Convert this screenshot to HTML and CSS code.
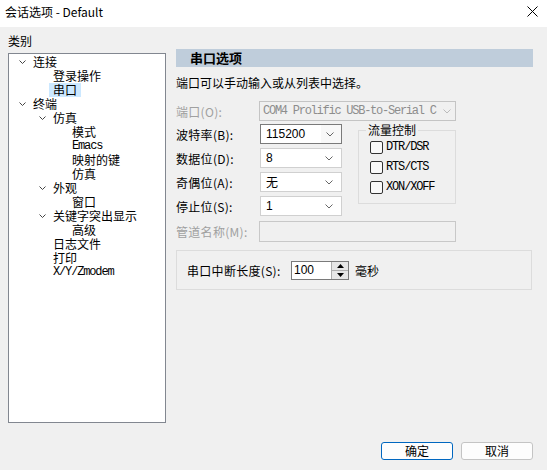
FILE: index.html
```html
<!DOCTYPE html>
<html lang="zh">
<head>
<meta charset="utf-8">
<title>会话选项 - Default</title>
<link rel="stylesheet" href="styles.css">
</head>
<body>
<div class="window">
  <div class="titlebar">
    <span class="title">会话选项 - Default</span>
    <svg class="close" width="11" height="11" viewBox="0 0 11 11"><path d="M0.5 0.5 L10.5 10.5 M10.5 0.5 L0.5 10.5" stroke="#000" stroke-width="1" fill="none"/></svg>
  </div>
  <div class="content">
    <div class="left">
      <div class="cat-label">类别</div>
      <div class="tree">
        <div class="node l0c"><span class="chev"><svg width="7" height="5" viewBox="0 0 7 5"><path d="M0.5 0.5 L3.5 3.5 L6.5 0.5" stroke="#444" fill="none"/></svg></span>连接</div>
        <div class="node l1">登录操作</div>
        <div class="node l1"><span class="sel">串口</span></div>
        <div class="node l0c"><span class="chev"><svg width="7" height="5" viewBox="0 0 7 5"><path d="M0.5 0.5 L3.5 3.5 L6.5 0.5" stroke="#444" fill="none"/></svg></span>终端</div>
        <div class="node l1c"><span class="chev"><svg width="7" height="5" viewBox="0 0 7 5"><path d="M0.5 0.5 L3.5 3.5 L6.5 0.5" stroke="#444" fill="none"/></svg></span>仿真</div>
        <div class="node l2">模式</div>
        <div class="node l2 mono">Emacs</div>
        <div class="node l2">映射的键</div>
        <div class="node l2">仿真</div>
        <div class="node l1c"><span class="chev"><svg width="7" height="5" viewBox="0 0 7 5"><path d="M0.5 0.5 L3.5 3.5 L6.5 0.5" stroke="#444" fill="none"/></svg></span>外观</div>
        <div class="node l2">窗口</div>
        <div class="node l1c"><span class="chev"><svg width="7" height="5" viewBox="0 0 7 5"><path d="M0.5 0.5 L3.5 3.5 L6.5 0.5" stroke="#444" fill="none"/></svg></span>关键字突出显示</div>
        <div class="node l2">高级</div>
        <div class="node l1">日志文件</div>
        <div class="node l1">打印</div>
        <div class="node l1 mono">X/Y/Zmodem</div>
      </div>
    </div>
    <div class="right">
      <div class="header">串口选项</div>
      <div class="desc">端口可以手动输入或从列表中选择。</div>
      <div class="row port-row">
        <span class="label disabled">端口(O):</span>
        <div class="combo wide is-disabled"><span class="val mono">COM4 Prolific USB-to-Serial C</span><svg class="arrow" width="8" height="5" viewBox="0 0 8 5"><path d="M0.5 0.5 L4 4 L7.5 0.5" stroke="#bbb" fill="none"/></svg></div>
      </div>
      <div class="mid">
        <div class="fields">
          <div class="row">
            <span class="label">波特率(B):</span>
            <div class="combo small edit"><span class="val num">115200</span><span class="btn"><svg class="arrow" width="8" height="5" viewBox="0 0 8 5"><path d="M0.5 0.5 L4 4 L7.5 0.5" stroke="#666" fill="none"/></svg></span></div>
          </div>
          <div class="row">
            <span class="label">数据位(D):</span>
            <div class="combo small"><span class="val num">8</span><svg class="arrow" width="8" height="5" viewBox="0 0 8 5"><path d="M0.5 0.5 L4 4 L7.5 0.5" stroke="#666" fill="none"/></svg></div>
          </div>
          <div class="row">
            <span class="label">奇偶位(A):</span>
            <div class="combo small"><span class="val">无</span><svg class="arrow" width="8" height="5" viewBox="0 0 8 5"><path d="M0.5 0.5 L4 4 L7.5 0.5" stroke="#666" fill="none"/></svg></div>
          </div>
          <div class="row">
            <span class="label">停止位(S):</span>
            <div class="combo small"><span class="val num">1</span><svg class="arrow" width="8" height="5" viewBox="0 0 8 5"><path d="M0.5 0.5 L4 4 L7.5 0.5" stroke="#666" fill="none"/></svg></div>
          </div>
        </div>
        <fieldset class="flow">
          <legend>流量控制</legend>
          <div class="check"><span class="box"></span><span class="mono">DTR/DSR</span></div>
          <div class="check"><span class="box"></span><span class="mono">RTS/CTS</span></div>
          <div class="check"><span class="box"></span><span class="mono">XON/XOFF</span></div>
        </fieldset>
      </div>
      <div class="row pipe-row">
        <span class="label disabled">管道名称(M):</span>
        <div class="input wide is-disabled"></div>
      </div>
      <div class="break-box">
        <span class="break-label">串口中断长度(S):</span>
        <div class="spin">
          <span class="spin-val num">100</span>
          <span class="spin-btns">
            <span class="sb"><svg width="7" height="4" viewBox="0 0 7 4"><path d="M3.5 0 L7 4 L0 4 Z" fill="#000"/></svg></span>
            <span class="sb"><svg width="7" height="4" viewBox="0 0 7 4"><path d="M0 0 L7 0 L3.5 4 Z" fill="#000"/></svg></span>
          </span>
        </div>
        <span class="unit">毫秒</span>
      </div>
    </div>
  </div>
  <div class="buttons">
    <button class="btn-ok">确定</button>
    <button class="btn-cancel">取消</button>
  </div>
</div>
</body>
</html>
```

FILE: styles.css
```css
* { box-sizing: border-box; }
html, body { margin: 0; padding: 0; }
body {
  background: #f0f0f0;
  font-family: "Noto Sans CJK SC", "Liberation Sans", sans-serif;
  font-size: 12px;
  color: #000;
}
.window {
  width: 547px;
  height: 470px;
  background: #f0f0f0;
  overflow: hidden;
}
.titlebar {
  height: 27px;
  background: #fff;
  display: flex;
  align-items: center;
  justify-content: space-between;
  padding: 0 9px 4px 5px;
}
.title { font-size: 12px; line-height: 16px; }
.close { display: block; }

.content {
  display: flex;
  align-items: flex-start;
}
.left { padding-left: 8px; }
.cat-label {
  margin-top: 6px;
  line-height: 16px;
  height: 16px;
}
.tree {
  margin-top: 4px;
  width: 158px;
  height: 370px;
  background: #fff;
  border: 1px solid #828790;
  padding-top: 1px;
}
.node {
  height: 14px;
  line-height: 14px;
  display: flex;
  align-items: center;
  white-space: nowrap;
}
.l0c { padding-left: 10px; }
.l1c { padding-left: 30px; }
.l1 { padding-left: 44px; }
.l2 { padding-left: 63px; }
.chev {
  width: 14px;
  display: flex;
  align-items: center;
}
.chev svg { display: block; }
.sel {
  background: #cce8ff;
  padding: 0 4px;
  margin-left: -4px;
  line-height: 14px;
}
.mono {
  font-family: "Liberation Mono", "DejaVu Sans Mono", monospace;
  font-size: 12px;
  letter-spacing: -1.15px;
}
.num {
  font-family: "Liberation Sans", sans-serif;
  font-size: 12px;
}

.right {
  margin-left: 10px;
  margin-top: 22px;
  width: 357px;
}
.header {
  height: 18px;
  background: #bfcddb;
  font-weight: bold;
  font-size: 13px;
  line-height: 18px;
  padding-left: 14px;
}
.desc {
  margin-top: 8px;
  line-height: 16px;
}
.row {
  display: flex;
  align-items: center;
}
.label {
  width: 83px;
  flex: none;
  white-space: nowrap;
  letter-spacing: 0.3px;
}
.disabled { color: #a0a0a0; }
.port-row { margin-top: 10px; height: 20px; }
.combo {
  height: 20px;
  display: flex;
  align-items: center;
  justify-content: space-between;
  border: 1px solid #d0d0d0;
  background: #fff;
  padding-left: 5px;
  padding-right: 8px;
  overflow: hidden;
}
.combo .val {
  white-space: nowrap;
  overflow: hidden;
  flex: 1;
  min-width: 0;
  line-height: 18px;
}
.combo .arrow { display: block; flex: none; }
.wide { width: 197px; }
.small { width: 82px; margin-left: 1px; }
.is-disabled {
  background: #f0f0f0;
  border-color: #c4c4c4;
  color: #8d8d8d;
}
.is-disabled .val { color: #8d8d8d; }
.combo.wide { padding-left: 3px; padding-right: 4px; }
.combo.wide .val { letter-spacing: -1.25px; margin-right: 2px; }
.edit {
  border-color: #7a7a7a;
  padding-right: 0;
}
.edit .btn {
  height: 100%;
  width: 20px;
  background: #f8f8f8;
  display: flex;
  align-items: center;
  justify-content: center;
  padding-right: 3px;
  flex: none;
}

.mid {
  display: flex;
  align-items: flex-start;
  margin-top: 3px;
}
.fields {
  width: 166px;
  display: flex;
  flex-direction: column;
  gap: 4px;
}
.fields .row { height: 20px; }
.flow {
  margin: -1px 0 0 16px;
  width: 98px;
  border: 1px solid #dcdcdc;
  padding: 0 0 6px 7px;
  min-width: 0;
}
.flow legend {
  padding: 0 2px;
  line-height: 14px;
}
.check {
  height: 20px;
  display: flex;
  align-items: center;
  padding-left: 4px;
}
.check .box {
  width: 13px;
  height: 13px;
  border: 1px solid #333;
  border-radius: 2px;
  background: #f9f9f9;
  margin-right: 3px;
  flex: none;
}
.pipe-row { margin-top: 5px; height: 21px; }
.input { height: 21px; border: 1px solid #c8c8c8; }

.break-box {
  margin-top: 8px;
  width: 356px;
  height: 40px;
  border: 1px solid #dcdcdc;
  display: flex;
  align-items: center;
  padding-left: 10px;
}
.break-label { width: 104px; white-space: nowrap; letter-spacing: 0.3px; }
.spin {
  width: 58px;
  height: 19px;
  display: flex;
  border: 1px solid #7a7a7a;
  background: #fff;
}
.spin-val {
  flex: 1;
  line-height: 17px;
  padding-left: 2px;
}
.spin-btns {
  width: 17px;
  display: flex;
  flex-direction: column;
  border-left: 1px solid #adadad;
  background: #e6e6e6;
}
.sb {
  flex: 1;
  display: flex;
  align-items: center;
  justify-content: center;
}
.sb + .sb { border-top: 1px solid #adadad; }
.sb svg { display: block; }
.unit { margin-left: 6px; }

.buttons {
  margin-top: 19px;
  display: flex;
  justify-content: flex-end;
  gap: 8px;
  padding-right: 14px;
}
.buttons button {
  width: 72px;
  height: 18px;
  font-family: "Noto Sans CJK SC", sans-serif;
  font-size: 12px;
  line-height: 14px;
  padding: 0;
  border-radius: 3px;
  color: #000;
}
.btn-ok {
  background: #fdfdfd;
  border: 1px solid #0067c0;
}
.btn-cancel {
  background: #fdfdfd;
  border: 1px solid #c4c4c4;
}
```
